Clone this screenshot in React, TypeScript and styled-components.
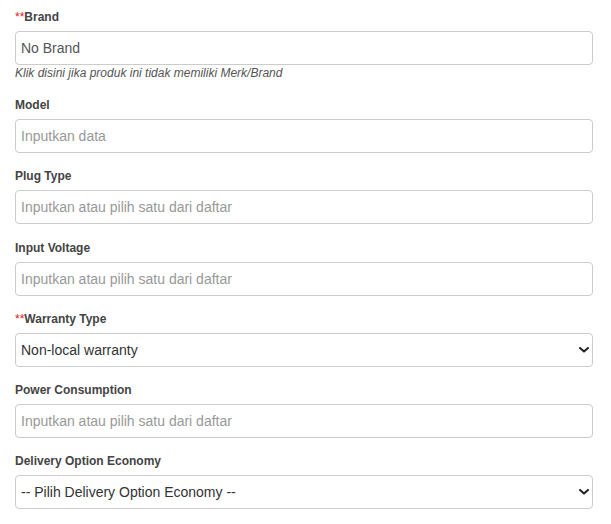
import * as React from 'react';
import styled, { createGlobalStyle } from 'styled-components';

const GlobalStyle = createGlobalStyle`
  body {
    margin: 0;
    background: #fff;
    font-family: 'Liberation Sans', Arial, sans-serif;
    color: #333;
  }
`;

interface Field {
  label: string;
  required?: boolean;
  kind: 'input' | 'select';
  value?: string;
  placeholder?: string;
  help?: string;
}

const fields: Field[] = [
  { label: 'Brand', required: true, kind: 'input', value: 'No Brand', help: 'Klik disini jika produk ini tidak memiliki Merk/Brand' },
  { label: 'Model', kind: 'input', placeholder: 'Inputkan data' },
  { label: 'Plug Type', kind: 'input', placeholder: 'Inputkan atau pilih satu dari daftar' },
  { label: 'Input Voltage', kind: 'input', placeholder: 'Inputkan atau pilih satu dari daftar' },
  { label: 'Warranty Type', required: true, kind: 'select', value: 'Non-local warranty' },
  { label: 'Power Consumption', kind: 'input', placeholder: 'Inputkan atau pilih satu dari daftar' },
  { label: 'Delivery Option Economy', kind: 'select', value: '-- Pilih Delivery Option Economy --' },
];

const Chevron = () => (
  <svg width="10" height="6" viewBox="0 0 10 6">
    <path d="M1 1 L5 4.6 L9 1" fill="none" stroke="#222" strokeWidth="2" strokeLinecap="round" strokeLinejoin="round" />
  </svg>
);

const App: React.FC = () => {
  return (
    <>
      <GlobalStyle />
      <Form>
        {fields.map((f) => (
          <Group key={f.label}>
            <Label>
              {f.required ? <Star>**</Star> : null}
              {f.label}
            </Label>
            {f.kind === 'input' ? (
              <TextInput defaultValue={f.value} placeholder={f.placeholder} />
            ) : (
              <SelectWrap>
                <Select defaultValue={f.value}>
                  <option>{f.value}</option>
                </Select>
                <Arrow>
                  <Chevron />
                </Arrow>
              </SelectWrap>
            )}
            {f.help ? <Help>{f.help}</Help> : null}
          </Group>
        ))}
      </Form>
    </>
  );
};

export default App;

const Form = styled.form`
  display: flex;
  flex-direction: column;
  padding: 7px 18px 0 15px;
`;

const Group = styled.div`
  display: flex;
  flex-direction: column;
  margin-bottom: 13.2px;
`;

const Label = styled.label`
  font-size: 12px;
  line-height: 20px;
  font-weight: bold;
  color: #444;
  margin-bottom: 4px;
`;

const Star = styled.span`
  color: #e02020;
  font-weight: normal;
`;

const controlBase = `
  box-sizing: border-box;
  width: 100%;
  height: 34px;
  padding: 6px 5px;
  font-family: 'Liberation Sans', Arial, sans-serif;
  font-size: 14px;
  color: #555;
  background: #fff;
  border: 1px solid #ccc;
  border-radius: 4px;
  outline: none;
`;

const TextInput = styled.input`
  ${controlBase}
  &::placeholder {
    color: #999;
  }
`;

const SelectWrap = styled.div`
  position: relative;
`;

const Select = styled.select`
  ${controlBase}
  appearance: none;
  color: #333;
`;

const Arrow = styled.span`
  position: absolute;
  right: 4px;
  top: 14px;
  display: flex;
  pointer-events: none;
`;

const Help = styled.span`
  font-size: 12px;
  line-height: 15px;
  font-style: italic;
  color: #555;
  margin-top: 1px;
  margin-bottom: 1px;
`;
